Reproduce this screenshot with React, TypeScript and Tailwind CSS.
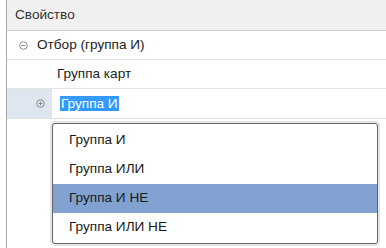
import React from "react";

function MinusIcon() {
  return (
    <svg width="9" height="9" viewBox="0 0 9 9" className="block">
      <circle cx="4.5" cy="4.5" r="3.8" fill="none" stroke="#8a8a8a" strokeWidth="1" />
      <line x1="2.5" y1="4.5" x2="6.5" y2="4.5" stroke="#8a8a8a" strokeWidth="1" />
    </svg>
  );
}

function PlusIcon() {
  return (
    <svg width="9" height="9" viewBox="0 0 9 9" className="block">
      <circle cx="4.5" cy="4.5" r="3.8" fill="none" stroke="#8a8a8a" strokeWidth="1" />
      <line x1="2.5" y1="4.5" x2="6.5" y2="4.5" stroke="#8a8a8a" strokeWidth="1" />
      <line x1="4.5" y1="2.5" x2="4.5" y2="6.5" stroke="#8a8a8a" strokeWidth="1" />
    </svg>
  );
}

export default function App() {
  const items = ["Группа И", "Группа ИЛИ", "Группа И НЕ", "Группа ИЛИ НЕ"];
  return (
    <div
      className="relative w-[386px] h-[248px] overflow-hidden bg-white text-[13.6px] text-[#222]"
      style={{ fontFamily: '"Liberation Sans", Arial, sans-serif' }}
    >
      <div className="ml-[6px] h-full border-l border-[#a8a8a8] flex flex-col">
        <div className="h-[31px] bg-[#f0f0f0] border-b border-[#cfcfcf] flex items-center pl-[8px] text-[#333]">
          Свойство
        </div>
        <div className="h-[29px] border-b border-[#e2e2e2] flex items-center">
          <div className="w-[30px] flex justify-center pl-[3px]">
            <MinusIcon />
          </div>
          <span>Отбор (группа И)</span>
        </div>
        <div className="h-[29px] border-b border-[#e2e2e2] flex items-center pl-[50px]">
          Группа карт
        </div>
        <div className="h-[30px] border-b border-[#e2e2e2] flex items-stretch">
          <div className="w-[45px] bg-[#dfe6f0] flex items-center justify-end pr-[7px]">
            <PlusIcon />
          </div>
          <div className="flex items-center pl-[8px]">
            <span className="bg-[#3399ff] text-white leading-[15px] px-px">Группа И</span>
          </div>
        </div>
      </div>

      <div className="absolute left-[52px] top-[123px] w-[326px] h-[121px] bg-white border border-[#676767] rounded-[3px] shadow-[0_0_0_2px_#e4e4e4] pt-[2px]">
        {items.map((t, i) => (
          <div
            key={t}
            className={
              "h-[29px] flex items-center pl-[16px] text-[#1a1a1a] " +
              (i === 2 ? "bg-[#81a2d1]" : "")
            }
          >
            {t}
          </div>
        ))}
      </div>
    </div>
  );
}
